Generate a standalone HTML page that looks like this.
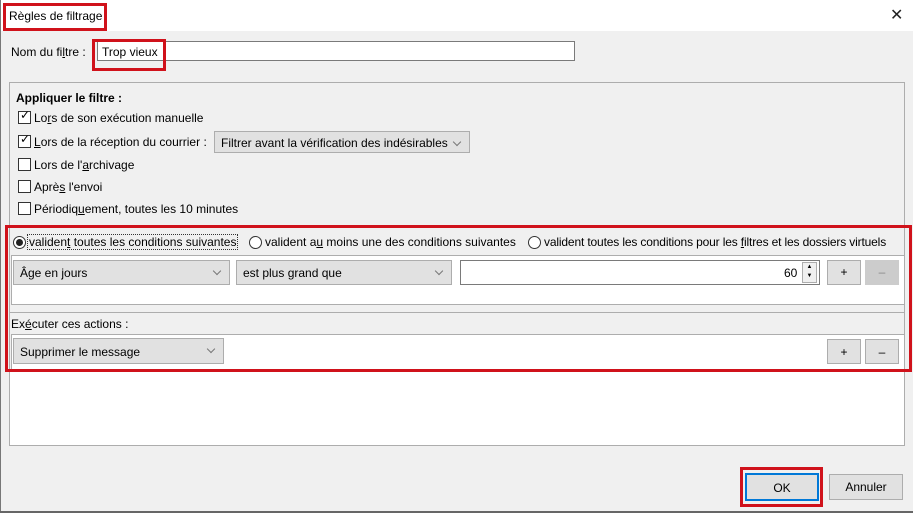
<!DOCTYPE html><html><head><style>
body{margin:0;width:913px;height:513px;background:#f0f0f0;font-family:"Liberation Sans",sans-serif;font-size:12px;color:#000;position:relative;overflow:hidden}
.a{position:absolute}
.red{position:absolute;border:3px solid #d0121b;box-sizing:border-box}
.cb{position:absolute;width:13px;height:13px;border:1px solid #333;background:#fff;box-sizing:border-box}
.dd{position:absolute;background:#e1e1e1;border:1px solid #adadad;box-sizing:border-box;padding:0 6px;line-height:22px}
.dd:after{content:"";position:absolute;right:9px;top:7px;width:5px;height:5px;border-right:1px solid #777;border-bottom:1px solid #777;transform:rotate(45deg)}
.btn{position:absolute;background:#e1e1e1;border:1px solid #adadad;box-sizing:border-box;text-align:center}
.rd{position:absolute;width:13px;height:13px;border:1px solid #333;border-radius:50%;background:#fff;box-sizing:border-box}
u{text-decoration:underline}
</style></head><body>
<div class="a" style="left:0;top:0;width:913px;height:31px;background:#fff"></div>
<div class="a" style="left:0;top:0;width:1px;height:513px;background:#777"></div>
<div class="a" style="left:9px;top:9px;font-size:12px">Règles de filtrage</div>
<div class="red" style="left:3px;top:3px;width:104px;height:28px"></div>
<div class="a" style="left:890px;top:5px;font-size:16px;color:#222">✕</div>

<div class="a" style="left:11px;top:45px">Nom du fi<u>l</u>tre :</div>
<div class="a" style="left:97px;top:41px;width:478px;height:20px;background:#fff;border:1px solid #7a7a7a;box-sizing:border-box"></div>
<div class="a" style="left:102px;top:45px">Trop vieux</div>
<div class="red" style="left:92px;top:39px;width:74px;height:32px"></div>

<div class="a" style="left:9px;top:82px;width:896px;height:364px;border:1px solid #adadad;box-sizing:border-box;background:#f0f0f0"></div>
<div class="a" style="left:10px;top:370px;width:894px;height:75px;background:#fff"></div>
<div class="a" style="left:16px;top:91px;font-weight:bold">Appliquer le filtre :</div>
<div class="cb" style="left:18px;top:111px"></div><div class="a" style="left:20px;top:108px;font-size:12px">✓</div>
<div class="a" style="left:34px;top:111px">Lo<u>r</u>s de son exécution manuelle</div>
<div class="cb" style="left:18px;top:135px"></div><div class="a" style="left:20px;top:132px">✓</div>
<div class="a" style="left:34px;top:135px"><u>L</u>ors de la réception du courrier :</div>
<div class="dd" style="left:214px;top:131px;width:256px;height:22px">Filtrer avant la vérification des indésirables</div>
<div class="cb" style="left:18px;top:158px"></div>
<div class="a" style="left:34px;top:158px">Lors de l'<u>a</u>rchivage</div>
<div class="cb" style="left:18px;top:180px"></div>
<div class="a" style="left:34px;top:180px">Aprè<u>s</u> l'envoi</div>
<div class="cb" style="left:18px;top:202px"></div>
<div class="a" style="left:34px;top:202px">Périodiq<u>u</u>ement, toutes les 10 minutes</div>

<div class="rd" style="left:13px;top:236px"></div><div class="a" style="left:16px;top:239px;width:7px;height:7px;border-radius:50%;background:#222"></div>
<div class="a" style="left:27px;top:234px;border:1px dotted #333;padding:0 1px">validen<u>t</u> toutes les conditions suivantes</div>
<div class="rd" style="left:249px;top:236px"></div>
<div class="a" style="left:265px;top:235px">valident a<u>u</u> moins une des conditions suivantes</div>
<div class="rd" style="left:528px;top:236px"></div>
<div class="a" style="left:544px;top:235px;letter-spacing:-0.15px">valident toutes les conditions pour les <u>f</u>iltres et les dossiers virtuels</div>
<div class="a" style="left:11px;top:255px;width:894px;height:50px;background:#fff;border:1px solid #adadad;box-sizing:border-box"></div>
<div class="dd" style="left:13px;top:260px;width:217px;height:25px;line-height:25px">Âge en jours</div>
<div class="dd" style="left:236px;top:260px;width:216px;height:25px;line-height:25px">est plus grand que</div>
<div class="a" style="left:460px;top:260px;width:360px;height:25px;background:#fff;border:1px solid #7a7a7a;box-sizing:border-box"></div>
<div class="a" style="left:784px;top:266px">60</div>
<div class="a" style="left:802px;top:262px;width:15px;height:21px;border:1px solid #adadad;box-sizing:border-box;background:#f0f0f0;font-size:6px;text-align:center;line-height:9px">▲<br>▼</div>
<div class="btn" style="left:827px;top:260px;width:34px;height:25px;line-height:23px">+</div>
<div class="btn" style="left:865px;top:260px;width:34px;height:25px;line-height:23px;background:#ccc;color:#888;border-color:#ccc">–</div>
<div class="a" style="left:10px;top:312px;width:894px;height:1px;background:#adadad"></div>
<div class="a" style="left:11px;top:317px">Ex<u>é</u>cuter ces actions :</div>
<div class="a" style="left:11px;top:334px;width:894px;height:36px;background:#fff;border:1px solid #adadad;box-sizing:border-box"></div>
<div class="dd" style="left:13px;top:338px;width:211px;height:26px;line-height:26px">Supprimer le message</div>
<div class="btn" style="left:827px;top:339px;width:34px;height:25px;line-height:25px">+</div>
<div class="btn" style="left:865px;top:339px;width:34px;height:25px;line-height:25px">–</div>
<div class="red" style="left:5px;top:225px;width:907px;height:147px"></div>

<div class="btn" style="left:745px;top:473px;width:74px;height:28px;line-height:26px;border:2px solid #0078d7">OK</div>
<div class="red" style="left:740px;top:467px;width:83px;height:40px"></div>
<div class="btn" style="left:829px;top:474px;width:74px;height:26px;line-height:24px">Annuler</div>
<div class="a" style="left:0;top:511px;width:913px;height:2px;background:#666"></div>
</body></html>
